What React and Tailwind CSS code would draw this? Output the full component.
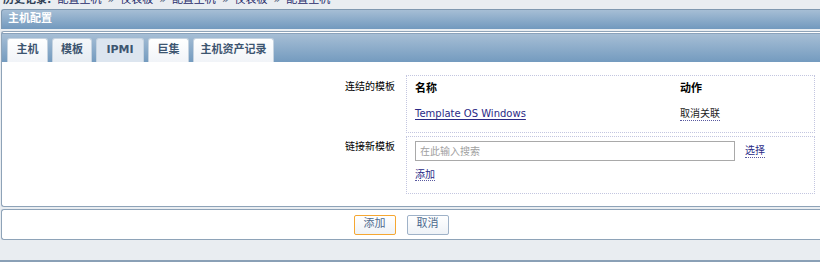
import React from 'react';

const font = { fontFamily: '"DejaVu Sans", "Noto Sans CJK SC", sans-serif' };

const tabs = [
    { label: '主机', w: 'w-[41px]', cls: 'bg-gradient-to-b from-white to-[#f1f4f8]' },
    { label: '模板', w: 'w-[40px]', cls: 'bg-gradient-to-b from-[#f4f7fa] to-[#e6ecf2]' },
    { label: 'IPMI', w: 'w-[48px]', cls: 'bg-[#dce5ef] border-[#9db3ca]' },
    { label: '巨集', w: 'w-[41px]', cls: 'bg-gradient-to-b from-white to-[#f1f4f8]' },
    { label: '主机资产记录', w: 'w-[81px]', cls: 'bg-gradient-to-b from-white to-[#f1f4f8]' },
];

const crumbs = ['配置主机', '仪表板', '配置主机', '仪表板', '配置主机'];

const App = () => {
    return (
        <div className="w-[820px] h-[262px] overflow-hidden bg-[#e9edf1] text-[10px] text-black" style={font}>
            {/* history line, scrolled mostly out of view */}
            <div className="h-[9px] overflow-hidden pl-[3px]">
                <div className="-mt-[7px] leading-[13px] text-[11px] flex items-center gap-[6px] text-[#1f2a6a]">
                    <span className="font-bold text-[#2f3f55]">历史记录:</span>
                    {crumbs.map((c, i) => (
                        <React.Fragment key={i}>
                            <span>{c}</span>
                            {i < crumbs.length - 1 && <span className="text-[#50607a]">»</span>}
                        </React.Fragment>
                    ))}
                </div>
            </div>

            {/* page header */}
            <div className="ml-[1px] h-[20px] border-t border-l border-[#7f98b0] rounded-tl-[3px] bg-gradient-to-b from-[#a6bed5] to-[#7299be] flex items-center pl-[6px]">
                <span className="text-white font-bold text-[11px]">主机配置</span>
            </div>

            {/* main form container */}
            <div className="mt-[2px] ml-[1px] border-l border-t border-b border-[#8ea3b8] rounded-l-[3px] bg-white pt-[1px]">
                <div className="h-[29px] border-t border-[#8aa2bb] bg-gradient-to-b from-[#a6bed5] to-[#749bbf] flex items-end pl-[5px] gap-[4px]">
                    {tabs.map((t) => (
                        <div
                            key={t.label}
                            className={`${t.w} h-[24px] rounded-t-[3px] border border-b-0 border-[#c5d3e0] ${t.cls} flex items-center justify-center font-bold text-[11px] text-[#3d5570]`}
                        >
                            {t.label}
                        </div>
                    ))}
                </div>

                <div className="pt-[13px] pb-[12px] flex flex-col gap-[3px]">
                    <div className="flex">
                        <div className="w-[393px] text-right pt-[6px] leading-[12px]">连结的模板</div>
                        <div className="ml-[11px] w-[409px] h-[58px] border border-dotted border-[#c3c6e0] px-[8px]">
                            <div className="flex pt-[6px] font-bold text-[11px] leading-[14px]">
                                <span className="w-[265px]">名称</span>
                                <span>动作</span>
                            </div>
                            <div className="flex mt-[11px] leading-[13px]">
                                <span className="w-[265px]">
                                    <span className="text-[#2a2a86] underline underline-offset-2">Template OS Windows</span>
                                </span>
                                <span className="text-[#222] border-b border-dotted border-[#5a5aa0]">取消关联</span>
                            </div>
                        </div>
                    </div>
                    <div className="flex">
                        <div className="w-[393px] text-right pt-[5px] leading-[12px]">链接新模板</div>
                        <div className="ml-[11px] w-[409px] h-[58px] border border-dotted border-[#c3c6e0] px-[8px] pt-[4px]">
                            <div className="flex items-center">
                                <div className="w-[320px] h-[20px] border border-[#a9a9a9] flex items-center pl-[4px] text-[#a0a0a0]">在此输入搜索</div>
                                <span className="ml-[10px] text-[#2a2a86] border-b border-dotted border-[#5a5aa0] leading-[12px]">选择</span>
                            </div>
                            <div className="mt-[6px]">
                                <span className="text-[#2a2a86] border-b border-dotted border-[#5a5aa0] leading-[12px]">添加</span>
                            </div>
                        </div>
                    </div>
                </div>
            </div>

            {/* buttons */}
            <div className="mt-[2px] ml-[1px] h-[31px] border-l border-t border-b border-[#8ea3b8] rounded-l-[3px] bg-white flex items-center justify-center gap-[11px] pr-[20px]">
                <button className="w-[42px] h-[20px] rounded-[2px] border border-[#f5a732] bg-gradient-to-b from-white to-[#eef2f7] text-[#4d6a8e] text-[11px]" style={font}>添加</button>
                <button className="w-[42px] h-[20px] rounded-[2px] border border-[#9fb2c8] bg-gradient-to-b from-white to-[#eef2f7] text-[#4d6a8e] text-[11px]" style={font}>取消</button>
            </div>

            <div className="mt-[20px] h-[2px] bg-[#8aa0b6]" />
        </div>
    );
};

export default App;
